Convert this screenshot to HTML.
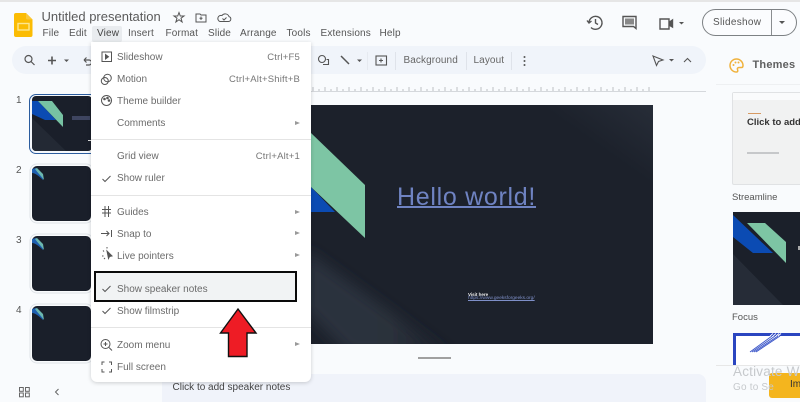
<!DOCTYPE html>
<html><head><meta charset="utf-8"><style>
html,body{margin:0;padding:0;width:800px;height:402px;overflow:hidden;background:#f9fbfd;font-family:"Liberation Sans",sans-serif;color:#444746}
div,span{position:absolute;white-space:nowrap}
svg{position:absolute;overflow:visible}
.m{font-size:10px;top:28px;line-height:11px;color:#555;letter-spacing:.15px}
.r{left:117px;font-size:10px;line-height:12px;color:#6b6b6b;letter-spacing:0}
.k{right:500px;font-size:9.5px;line-height:12px;color:#777;letter-spacing:.2px}
.a{left:295px;width:0;height:0;border-left:5px solid #999;border-top:2.5px solid transparent;border-bottom:2.5px solid transparent}
.s{left:91px;width:220px;height:1px;background:#e4e4e4}
.n{font-size:10px;color:#555;left:16px}
.t{left:32px;width:59px;background:#1a1f2a;border-radius:5px;box-shadow:0 0 0 1.5px #f9fbfd,0 0 0 2.5px #dfe3e8}
.tb{font-size:10px;color:#666;top:55px;line-height:12px;letter-spacing:.1px}
</style></head><body>
<div style="left:0;top:0;width:800px;height:2px;background:#e6e6e6"></div>

<!-- logo -->
<svg style="left:14px;top:13px" width="19" height="24" viewBox="0 0 19 24"><path d="M2 0H12L18.500 6.500V22a2 2 0 0 1-2 2H2a2 2 0 0 1-2-2V2A2 2 0 0 1 2 0Z" fill="#fbbc04"/><path d="M12 0L18.500 6.500H13.500A1.500 1.500 0 0 1 12 5Z" fill="#fac83a"/><rect x="4" y="10.500" width="11" height="6.500" fill="none" stroke="#fde68f" stroke-width="1.400"/></svg>
<div style="left:41.500px;top:9px;font-size:13px;line-height:15px;color:#5a5a5a;letter-spacing:0">Untitled presentation</div>
<svg style="left:173px;top:11px" width="60" height="13" viewBox="0 0 60 13" fill="none" stroke="#555" stroke-width="1"><path d="M6 1.500L7.300 5H11L8 7.200 9.100 11 6 8.700 2.900 11 4 7.200 1 5H4.700Z"/><path d="M23 3H27L28 4H33V11H23Z"/><path d="M28 5.500V9M26.500 7.200H29.500"/><path d="M47 10.500H55.500A2.500 2.500 0 0 0 56 5.600 4 4 0 0 0 49 4.500 3 3 0 0 0 47 10.500Z"/><path d="M49.500 7.500L51 9 53.500 6.500"/></svg>

<div class="m" style="left:42.500px">File</div><div class="m" style="left:69px">Edit</div>
<div style="left:92px;top:26px;width:30px;height:16px;background:#e9ecef;border-radius:2px"></div>
<div class="m" style="left:97px;color:#444">View</div>
<div class="m" style="left:128px">Insert</div><div class="m" style="left:165.500px">Format</div><div class="m" style="left:208px">Slide</div><div class="m" style="left:240px">Arrange</div><div class="m" style="left:286.500px">Tools</div><div class="m" style="left:320.500px">Extensions</div><div class="m" style="left:379.500px">Help</div>

<!-- toolbar -->
<div style="left:12px;top:46px;width:694px;height:28px;background:#f0f4fa;border-radius:14px"></div>
<svg style="left:24px;top:54px" width="70" height="14" viewBox="0 0 70 14" fill="none" stroke="#555" stroke-width="1.200"><circle cx="4.500" cy="5" r="3.500"/><path d="M7 7.500L10.500 11"/><path d="M28 2.500V10.500M24 6.500H32" stroke-width="1.600"/><path d="M40 5.500H45L42.500 8Z" fill="#555" stroke="none"/><path d="M60 6H65a2.500 2.500 0 0 1 0 5H62M60 6L62.500 3.500M60 6L62.500 8.500"/></svg>
<svg style="left:316px;top:54px" width="230" height="14" viewBox="0 0 230 14" fill="none" stroke="#555" stroke-width="1.100"><circle cx="6" cy="5" r="3.500"/><path d="M7 10.500H12.500V5.500H10.500"/><path d="M25 2L33 10" stroke-width="1.500"/><path d="M41 5.500H46L43.500 8Z" fill="#555" stroke="none"/><rect x="60" y="2" width="10.500" height="9"/><path d="M65 4.500V8.500M63 6.500H67"/></svg>
<div style="left:367px;top:52px;width:1px;height:18px;background:#e6eaf0"></div>
<div style="left:394.500px;top:52px;width:1px;height:18px;background:#dfe3ea"></div>
<div style="left:466px;top:52px;width:1px;height:18px;background:#dfe3ea"></div>
<div style="left:511px;top:52px;width:1px;height:18px;background:#dfe3ea"></div>
<div class="tb" style="left:403.500px">Background</div>
<div class="tb" style="left:473.500px">Layout</div>
<svg style="left:522px;top:55px" width="5" height="12"><circle cx="2.500" cy="2" r="1" fill="#555"/><circle cx="2.500" cy="6" r="1" fill="#555"/><circle cx="2.500" cy="10" r="1" fill="#555"/></svg>
<svg style="left:651px;top:54px" width="45" height="14" viewBox="0 0 45 14" fill="none" stroke="#555" stroke-width="1.100"><path d="M2 2L12 6 7.500 7.500 5.500 11.500Z"/><path d="M18 5H23L20.500 7.500Z" fill="#555" stroke="none"/><path d="M33 8L36.500 4.500 40 8"/></svg>

<!-- top right -->
<svg style="left:587px;top:14px" width="110" height="18" viewBox="0 0 110 18" fill="none" stroke="#555" stroke-width="1.400"><path d="M2 8.500A6.500 6.500 0 1 1 4 13.500"/><path d="M0 6.500L2 9 4.500 7"/><path d="M8.500 5V9L11 10.500"/><path d="M36 2.500H49V14.500L46.500 12.500H36Z"/><rect x="38" y="4.500" width="9" height="6" fill="#888" stroke="none"/><path d="M73 5H82V15H73Z"/><path d="M82 8.500L85.500 6V13L82 11" fill="#555"/><path d="M92 8H97L94.500 10.500Z" fill="#555" stroke="none"/></svg>
<div style="left:701.500px;top:9px;width:93px;height:25px;border:1px solid #7d8184;border-radius:14px;background:#fbfcfe"></div>
<div style="left:771px;top:10px;width:1px;height:25px;background:#8a8d90"></div>
<div style="left:713px;top:16px;font-size:10px;line-height:13px;color:#555;letter-spacing:.3px">Slideshow</div>
<svg style="left:779px;top:21px" width="8" height="4"><path d="M0 0H6L3 3Z" fill="#555"/></svg>

<!-- filmstrip -->
<div class="n" style="top:95px">1</div><div class="n" style="top:165px">2</div><div class="n" style="top:235px">3</div><div class="n" style="top:305px">4</div>
<div style="left:29px;top:94px;width:70px;height:60px;border:1.500px solid #2b5c9e;border-radius:7px;box-sizing:border-box;background:#f4f7fb"></div>
<div style="left:32px;top:96px;width:60px;height:55px;border-radius:4px;background:#1a1f2a;overflow:hidden">
<svg width="60" height="55" viewBox="0 0 60 55"><path d="M0 22L34 55H0Z" fill="#232934"/><path d="M0 5V18L13 24H24L6 5Z" fill="#0b4bb3"/><path d="M6 5H20L31 19V31Z" fill="#77c2a3"/></svg></div>
<div style="left:72px;top:116px;width:18px;height:4px;background:#3e4560"></div>
<div style="left:88px;top:140px;width:4px;height:1px;background:#ddd"></div>
<div class="t" style="top:166px;height:55px"></div>
<div class="t" style="top:236px;height:55px"></div>
<div class="t" style="top:306px;height:55px"></div>
<svg style="left:32px;top:166px" width="14" height="14"><path d="M0 3V7C3 7 7 10 11 14L11 9 4 2Z" fill="#1f5fb0"/><path d="M3 3L5 2 11 8 12 14C9 10 6 7 3 3Z" fill="#6cb8b0"/></svg>
<svg style="left:32px;top:236px" width="14" height="14"><path d="M0 3V7C3 7 7 10 11 14L11 9 4 2Z" fill="#1f5fb0"/><path d="M3 3L5 2 11 8 12 14C9 10 6 7 3 3Z" fill="#6cb8b0"/></svg>
<svg style="left:32px;top:306px" width="14" height="14"><path d="M0 3V7C3 7 7 10 11 14L11 9 4 2Z" fill="#1f5fb0"/><path d="M3 3L5 2 11 8 12 14C9 10 6 7 3 3Z" fill="#6cb8b0"/></svg>
<svg style="left:19px;top:387px" width="48" height="12" viewBox="0 0 48 12" fill="none" stroke="#666" stroke-width="1"><rect x=".5" y=".5" width="3.800" height="3.800"/><rect x="6.500" y=".5" width="3.800" height="3.800"/><rect x=".5" y="6" width="3.800" height="3.800"/><rect x="6.500" y="6" width="3.800" height="3.800"/><path d="M39.500 2L36.500 5 39.500 8"/></svg>

<!-- ruler -->
<svg style="left:311px;top:84px" width="395" height="9" viewBox="0 0 395 9"><path d="M0 7.500H395" stroke="#d5d8dc" stroke-width="1"/><path d="M2 3V7M8 5V7M14 3V7M20 5V7M26 3V7M32 5V7M38 3V7M44 5V7M50 3V7M56 5V7M62 3V7M68 5V7M74 3V7M80 5V7M86 3V7M92 5V7M98 3V7M104 5V7M110 3V7M116 5V7M122 3V7M128 5V7M134 3V7M140 5V7M146 3V7M152 5V7M158 3V7M164 5V7M170 3V7M176 5V7M182 3V7M188 5V7M194 3V7M200 5V7M206 3V7M212 5V7M218 3V7M224 5V7M230 3V7M236 5V7M242 3V7M248 5V7M254 3V7M260 5V7M266 3V7M272 5V7M278 3V7M284 5V7M290 3V7M296 5V7M302 3V7M308 5V7M314 3V7M320 5V7M326 3V7M332 5V7M338 3V7" stroke="#aeb1b5" stroke-width=".8"/></svg>

<!-- main slide -->
<div style="left:290px;top:105px;width:363px;height:239px;background:#1c212b;overflow:hidden">
<svg width="363" height="239" viewBox="0 0 363 239"><defs><filter id="b" x="-20%" y="-20%" width="140%" height="140%"><feGaussianBlur stdDeviation="7"/></filter><linearGradient id="g1" x1="0" y1="0" x2="1" y2="0"><stop offset="0" stop-color="#2b323e"/><stop offset=".6" stop-color="#2a303b"/><stop offset="1" stop-color="#1c212b"/></linearGradient><linearGradient id="g2" x1="1" y1="0" x2="0" y2="1"><stop offset="0" stop-color="#272d38"/><stop offset=".5" stop-color="#1c212b"/></linearGradient></defs><rect x="250" width="113" height="80" fill="url(#g2)"/><path d="M15 145L160 250H60L15 205Z" fill="url(#g1)" filter="url(#b)"/><path d="M21 82L45 107H21Z" fill="#0b4bb3"/><path d="M21 28L75 80V133L21 82Z" fill="#7dc5a4"/></svg>
<div style="left:107px;top:77px;font-size:25px;line-height:30px;color:#6f83c2;text-decoration:underline;text-decoration-thickness:1.500px;letter-spacing:.7px;font-weight:400">Hello world!</div>
<div style="left:178px;top:187px;font-size:4.500px;line-height:5px;color:#eee;font-weight:700">Visit here</div>
<div style="left:178px;top:191px;font-size:4.800px;line-height:5px;color:#7e8fc8;text-decoration:underline">https://www.geeksforgeeks.org/</div>
</div>
<div style="left:418px;top:357px;width:33px;height:2px;background:#a0a0a0"></div>

<!-- notes -->
<div style="left:162px;top:374px;width:544px;height:28px;background:#f0f3fa;border-radius:8px 8px 0 0"></div>
<div style="left:172.500px;top:381px;font-size:10px;line-height:14px;color:#444;letter-spacing:0">Click to add speaker notes</div>

<!-- menu -->
<div style="left:91px;top:42px;width:220px;height:340px;background:#fff;border-radius:0 0 6px 6px;box-shadow:0 1px 4px rgba(0,0,0,.18)"></div>
<div style="left:94px;top:271px;width:203px;height:31px;background:#f1f3f4"></div>
<div style="left:94px;top:271px;width:203px;height:31px;border:2px solid #0a0a0a;box-sizing:border-box"></div>
<svg style="left:100px;top:50px" width="14" height="325" viewBox="0 0 14 325" fill="none" stroke="#555" stroke-width="1"><rect x="2" y="2" width="9.500" height="9.500"/><path d="M5.500 4.500L8.500 6.700 5.500 9Z" fill="#555"/>
<circle cx="4.800" cy="31" r="3.500"/><circle cx="7.500" cy="28" r="3.800"/>
<circle cx="6.500" cy="50.500" r="5"/><circle cx="4.500" cy="49" r=".8" fill="#555"/><circle cx="7.500" cy="48" r=".8" fill="#555"/><circle cx="9" cy="50.500" r=".8" fill="#555"/>
<path d="M2.500 129L5 131.500 10.500 126" stroke-width="1"/>
<path d="M2 159.500H11M2 163H11M5 156V167M8.500 156V167"/>
<path d="M1 183.500H9M6.500 181L9 183.500 6.500 186M11.500 180V187" stroke-width="1"/>
<path d="M7 201L12 206 9.500 206.500 8.500 208.500Z" fill="#555"/><path d="M2 206H3.500M3 200.500L4 201.500M7 197V198.500M4 209L5 208" />
<path d="M2.500 239L5 241.500 10.500 236"/><path d="M2.500 261L5 263.500 10.500 258"/>
<circle cx="5.500" cy="294" r="4.500"/><path d="M9 297.500L12 300.500M5.500 292V296M3.500 294H7.500"/>
<path d="M2 315V312H4.500M9 312H11.500V315M2 319V322H4.500M9 322H11.500V319"/></svg>
<div class="r" style="top:52px">Slideshow</div><div class="k" style="top:52px">Ctrl+F5</div>
<div class="r" style="top:74px">Motion</div><div class="k" style="top:74px">Ctrl+Alt+Shift+B</div>
<div class="r" style="top:96px">Theme builder</div>
<div class="r" style="top:118px">Comments</div><div class="a" style="top:120.500px"></div>
<div class="s" style="top:139px"></div>
<div class="r" style="top:151px">Grid view</div><div class="k" style="top:151px">Ctrl+Alt+1</div>
<div class="r" style="top:173px">Show ruler</div>
<div class="s" style="top:195px"></div>
<div class="r" style="top:207px">Guides</div><div class="a" style="top:209.500px"></div>
<div class="r" style="top:229px">Snap to</div><div class="a" style="top:231px"></div>
<div class="r" style="top:251px">Live pointers</div><div class="a" style="top:253px"></div>
<div class="r" style="top:284px">Show speaker notes</div>
<div class="r" style="top:306px">Show filmstrip</div>
<div class="s" style="top:327px"></div>
<div class="r" style="top:340px">Zoom menu</div><div class="a" style="top:342px"></div>
<div class="r" style="top:362px">Full screen</div>
<svg style="left:220px;top:308px" width="37" height="50" viewBox="0 0 37 50"><path d="M18 1L36 25H27V48.500H8.500V25H0.500Z" fill="#ee1c25" stroke="#111" stroke-width="1.400"/></svg>

<!-- right panel -->
<div style="left:716px;top:84px;width:84px;height:1px;background:#eef0f2"></div>
<svg style="left:729px;top:58px" width="15" height="15" viewBox="0 0 15 15"><path d="M7.500 1A6.500 6.500 0 0 0 7.500 14C9 14 9 12.500 8.500 11.500 8 10 9 9.500 10.500 9.500H12.500C13.500 9.500 14 8.500 14 7.500 14 4 11 1 7.500 1Z" fill="none" stroke="#f0b23c" stroke-width="1.500"/><circle cx="4.500" cy="7" r="1" fill="#f0b23c"/><circle cx="6.500" cy="4.500" r="1" fill="#f0b23c"/><circle cx="9.500" cy="4.500" r="1" fill="#f0b23c"/></svg>
<div style="left:752.500px;top:58px;font-size:11px;line-height:14px;color:#444;letter-spacing:.2px;font-weight:700;opacity:.85">Themes</div>

<div style="left:732px;top:92px;width:68px;height:93px;background:#f1f2f2;border:1px solid #e0e2e4;border-right:0;box-sizing:border-box;border-radius:2px 0 0 2px"></div>
<div style="left:733px;top:93px;width:67px;height:7px;background:#fafbfc"></div>
<div style="left:748px;top:113px;width:13px;height:1px;background:#d79a63"></div>
<div style="left:747px;top:117px;font-size:9.500px;line-height:12px;color:#333;font-weight:700">Click to add</div>
<div style="left:747px;top:152px;width:32px;height:2px;background:#c6c8ca"></div>
<div style="left:732px;top:192px;font-size:9.500px;line-height:12px;color:#555;letter-spacing:0">Streamline</div>

<div style="left:733px;top:212px;width:67px;height:93px;background:#1b202a;overflow:hidden">
<svg width="67" height="93" viewBox="0 0 67 93"><path d="M0 42L50 93H0Z" fill="#262c37"/><path d="M0 3V25L20 41H40Z" fill="#0b4bb3"/><path d="M14 11H32L53 30V51Z" fill="#7dc5a4"/></svg></div>
<div style="left:798px;top:246px;width:2px;height:4px;background:#aaa"></div>
<div style="left:732px;top:312px;font-size:9.500px;line-height:12px;color:#555;letter-spacing:0">Focus</div>

<div style="left:733px;top:333px;width:67px;height:32px;background:#fff;box-sizing:border-box;border:3px solid #2a45c0;border-right:0;border-bottom:0"></div>
<svg style="left:749px;top:333px" width="34" height="21" viewBox="0 0 34 21" fill="none" stroke="#3a55c8" stroke-width=".9"><path d="M1 19L23 3M3 19L26 3M5 19L29 3M7 19L31 3"/><path d="M21 3L24 .5M24 3L27 .5M27 3L30 .5M29 3L32 .5" stroke="#fff"/></svg>
<div style="left:716px;top:365px;width:84px;height:37px;background:#f9fbfd;border-top:1px solid #e7e7e7;box-sizing:border-box"></div>
<div style="left:769px;top:373px;width:31px;height:25px;background:#f4b51e;border-radius:3px 0 0 3px"></div>
<div style="left:790px;top:379px;font-size:10px;line-height:12px;color:#333">Im</div>
<div style="left:733px;top:364px;font-size:13.500px;line-height:16px;color:#c6c9cc;letter-spacing:.2px">Activate Wi</div>
<div style="left:733px;top:381px;font-size:10px;line-height:13px;color:#c6c9cc;letter-spacing:.2px">Go to Se</div>
</body></html>
